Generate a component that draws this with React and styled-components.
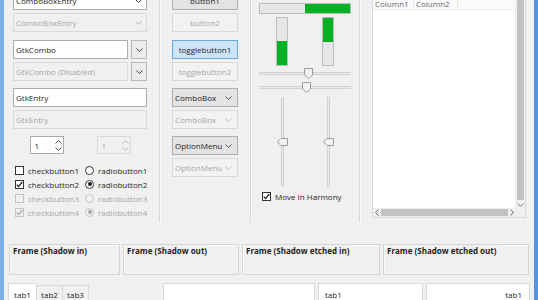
import React from "react";
import styled, { createGlobalStyle } from "styled-components";

const GlobalStyle = createGlobalStyle`
  html, body { margin: 0; padding: 0; background: #f0f0f0; }
  body {
    font-family: "Open Sans", "Noto Sans", sans-serif;
    font-size: 8px;
    color: #1e1e1e;
  }
  * { box-sizing: border-box; }
`;

const Window = styled.div`
  width: 538px;
  height: 300px;
  overflow: hidden;
  background: #f0f0f0;
  border-left: 4px solid #78b0ea;
  border-right: 4px solid #5296e3;
  display: flex;
  flex-direction: column;
`;

const TopArea = styled.div`
  display: flex;
  height: 231px;
  margin-top: -9px;
  flex-shrink: 0;
`;

const Column = styled.div`
  width: ${(p) => p.$w}px;
  padding-left: ${(p) => p.$pad}px;
  padding-top: ${(p) => p.$top || 0}px;
  display: flex;
  flex-direction: column;
  flex-shrink: 0;
`;

const Sep = styled.div`
  width: 2px;
  flex-shrink: 0;
  border-left: 1px solid #d7d7d7;
  border-right: 1px solid #fcfcfc;
`;

const Group = styled.div`
  display: flex;
  flex-direction: column;
  gap: 3px;
  margin-bottom: ${(p) => p.$mb || 0}px;
`;

/* ---------- entries ---------- */

const Entry = styled.div`
  width: ${(p) => p.$w || 134}px;
  height: 19px;
  display: flex;
  align-items: center;
  padding: 0 4px 0 2px;
  background: ${(p) => (p.$disabled ? "#f0f0f0" : "#fff")};
  border: 1px solid ${(p) => (p.$disabled ? "#d9d9d9" : "#acacac")};
  color: ${(p) => (p.$disabled ? "#a6a6a6" : "#1e1e1e")};
`;

const EntryText = styled.span`
  flex: 1;
  white-space: nowrap;
`;

const ComboRow = styled.div`
  display: flex;
  gap: 3px;
`;

const ArrowButton = styled.div`
  width: 16px;
  height: 19px;
  display: flex;
  align-items: center;
  justify-content: center;
  background: #ececec;
  border: 1px solid #b8b8b8;
`;

const Chevron = ({ color = "#444", up }) => (
  <svg width="7" height="4" viewBox="0 0 7 4">
    <polyline
      points={up ? "0.5,3.5 3.5,0.5 6.5,3.5" : "0.5,0.5 3.5,3.5 6.5,0.5"}
      fill="none"
      stroke={color}
      strokeWidth="1"
    />
  </svg>
);

const SideChevron = ({ left, color = "#666" }) => (
  <svg width="4" height="7" viewBox="0 0 4 7">
    <polyline
      points={left ? "3.5,0.5 0.5,3.5 3.5,6.5" : "0.5,0.5 3.5,3.5 0.5,6.5"}
      fill="none"
      stroke={color}
      strokeWidth="1"
    />
  </svg>
);

/* ---------- spin ---------- */

const SpinRow = styled.div`
  display: grid;
  grid-template-columns: 67px 67px;
  justify-items: center;
  margin-bottom: 9px;
`;

const Spin = styled.div`
  width: 34px;
  height: 18px;
  display: flex;
  align-items: center;
  padding: 0 1px 0 4px;
  background: ${(p) => (p.$disabled ? "#f0f0f0" : "#fff")};
  border: 1px solid ${(p) => (p.$disabled ? "#d9d9d9" : "#acacac")};
  color: ${(p) => (p.$disabled ? "#a6a6a6" : "#1e1e1e")};
`;

const SpinArrows = styled.div`
  display: flex;
  flex-direction: column;
  gap: 3px;
`;

/* ---------- checks & radios ---------- */

const CheckGrid = styled.div`
  display: grid;
  grid-template-columns: 70px 70px;
  grid-auto-rows: 14px;
`;

const CheckItem = styled.div`
  display: flex;
  align-items: center;
  gap: 4px;
  padding-left: ${(p) => p.$pad ?? 2}px;
  color: ${(p) => (p.$disabled ? "#a6a6a6" : "#1e1e1e")};
  white-space: nowrap;
`;

const Box = styled.span`
  width: 9px;
  height: 9px;
  flex-shrink: 0;
  display: flex;
  align-items: center;
  justify-content: center;
  background: ${(p) => (p.$disabled ? "#f0f0f0" : "#fff")};
  border: 1px solid ${(p) => (p.$disabled ? "#c4c4c4" : "#333")};
  border-radius: ${(p) => (p.$round ? "50%" : "0")};
`;

const Dot = styled.span`
  width: 4px;
  height: 4px;
  border-radius: 50%;
  background: ${(p) => (p.$disabled ? "#a6a6a6" : "#1e1e1e")};
`;

const Tick = ({ color }) => (
  <svg width="7" height="7" viewBox="0 0 7 7">
    <polyline points="0.8,3.6 2.6,5.6 6.3,1" fill="none" stroke={color} strokeWidth="1.3" />
  </svg>
);

const Check = ({ label, checked, disabled }) => (
  <CheckItem $disabled={disabled}>
    <Box $disabled={disabled}>{checked && <Tick color={disabled ? "#a6a6a6" : "#1e1e1e"} />}</Box>
    {label}
  </CheckItem>
);

const Radio = ({ label, checked, disabled }) => (
  <CheckItem $disabled={disabled}>
    <Box $round $disabled={disabled}>{checked && <Dot $disabled={disabled} />}</Box>
    {label}
  </CheckItem>
);

/* ---------- buttons ---------- */

const Button = styled.div`
  width: 66px;
  height: 19px;
  display: flex;
  align-items: center;
  justify-content: ${(p) => (p.$menu ? "space-between" : "center")};
  padding: ${(p) => (p.$menu ? "0 5px 0 2px" : "0")};
  white-space: nowrap;
  background: ${(p) => (p.$active ? "#cce4f7" : p.$disabled ? "#f2f2f2" : "#e3e3e3")};
  border: 1px solid
    ${(p) => (p.$active ? "#6fa9e2" : p.$disabled ? "#d9d9d9" : "#adadad")};
  color: ${(p) => (p.$disabled ? "#a6a6a6" : "#1e1e1e")};
`;

/* ---------- progress & scales ---------- */

const HProgress = styled.div`
  width: 92px;
  height: 11px;
  display: flex;
  justify-content: flex-end;
  background: #e6e6e6;
  border: 1px solid #bcbcbc;
`;

const Fill = styled.div`
  background: #06b025;
`;

const Halves = styled.div`
  display: grid;
  grid-template-columns: 46px 46px;
  justify-items: center;
  margin-top: ${(p) => p.$mt || 0}px;
`;

const VProgress = styled.div`
  width: 12px;
  height: 49px;
  display: flex;
  flex-direction: column;
  justify-content: ${(p) => (p.$fromTop ? "flex-start" : "flex-end")};
  background: #e6e6e6;
  border: 1px solid #bcbcbc;
`;

const HScale = styled.div`
  width: 92px;
  height: 11px;
  margin-top: ${(p) => p.$mt}px;
  display: flex;
  background: linear-gradient(
      to bottom,
      #d2d2d2 0 1px,
      #e9e9e9 1px 2px,
      #d2d2d2 2px 3px
    )
    0 50% / 100% 3px no-repeat;
`;

const VScale = styled.div`
  width: 11px;
  height: 90px;
  display: flex;
  flex-direction: column;
  align-items: flex-start;
  background: linear-gradient(
      to right,
      #d2d2d2 0 1px,
      #e9e9e9 1px 2px,
      #d2d2d2 2px 3px
    )
    50% 0 / 3px 100% no-repeat;
`;

const ThumbDown = () => (
  <svg width="9" height="11" viewBox="0 0 9 11">
    <path d="M0.5,0.5 H8.5 V7 L4.5,10.5 L0.5,7 Z" fill="#f2f2f2" stroke="#9a9a9a" />
  </svg>
);

const ThumbLeft = () => (
  <svg width="11" height="8" viewBox="0 0 11 8">
    <path d="M0.5,4 L4,0.5 H10.5 V7.5 H4 Z" fill="#f2f2f2" stroke="#9a9a9a" />
  </svg>
);

/* ---------- tree view ---------- */

const Tree = styled.div`
  width: 154px;
  height: 223px;
  margin-top: 4px;
  border: 1px solid #dadada;
  display: grid;
  grid-template-columns: 1fr 10px;
  grid-template-rows: 1fr 9px;
  background: #f0f0f0;
`;

const TreeBody = styled.div`
  background: #fff;
`;

const TreeHeader = styled.div`
  display: flex;
  height: 14px;
  padding-top: 1px;
  background: #fafafa;
  border-bottom: 1px solid #ececec;
  color: #6b6b6b;
`;

const HeaderCell = styled.div`
  width: ${(p) => p.$w}px;
  padding-left: 2px;
  display: flex;
  align-items: center;
  border-right: 1px solid #e6e6e6;
`;

const VScroll = styled.div`
  display: flex;
  flex-direction: column;
  align-items: center;
  padding: 2px 1px 1px 1px;
  gap: 3px;
`;

const VThumb = styled.div`
  width: 7px;
  flex: 1;
  background: #c2c2c2;
`;

const HScroll = styled.div`
  display: flex;
  align-items: center;
  padding: 0 1px 0 2px;
  gap: 2px;
`;

const HThumb = styled.div`
  height: 7px;
  flex: 1;
  background: #c2c2c2;
`;

/* ---------- frames ---------- */

const FramesRow = styled.div`
  display: flex;
  gap: 3px;
  padding-left: 5px;
  margin-top: 22px;
  flex-shrink: 0;
`;

const Frame = styled.div`
  width: ${(p) => p.$w}px;
  height: 31px;
  border: 1px solid #d6d6d6;
  box-shadow: inset 1px 1px 0 #fbfbfb;
`;

const Legend = styled.span`
  display: inline-block;
  margin: -6px 0 0 2px;
  padding: 0 1px;
  line-height: 11px;
  font-weight: 700;
  background: #f0f0f0;
  white-space: nowrap;
`;

/* ---------- notebooks ---------- */

const NotebookRow = styled.div`
  display: flex;
  gap: 3px;
  padding-left: 4px;
  margin-top: 8px;
  flex-shrink: 0;
`;

const TabStrip = styled.div`
  width: 152px;
  display: flex;
  align-items: flex-start;
`;

const Tab = styled.div`
  width: ${(p) => (p.$active ? 29 : 26)}px;
  height: ${(p) => (p.$active ? 20 : 18)}px;
  margin-top: ${(p) => (p.$active ? 0 : 2)}px;
  padding-top: ${(p) => (p.$active ? 5 : 3)}px;
  line-height: 11px;
  text-align: center;
  background: ${(p) => (p.$active ? "#fff" : "#f0f0f0")};
  border: 1px solid #d9d9d9;
  border-left-width: ${(p) => (p.$first ? 1 : 0)}px;
`;

const Page = styled.div`
  width: ${(p) => p.$w}px;
  height: 20px;
  padding: 5px ${(p) => p.$pad}px 0;
  line-height: 11px;
  text-align: ${(p) => p.$align || "left"};
  background: #fff;
  border: 1px solid #d9d9d9;
`;

export default function App() {
  return (
    <>
      <GlobalStyle />
      <Window>
        <TopArea>
          <Column $w={155} $pad={9}>
            <Group $mb={8}>
              <Entry>
                <EntryText>ComboBoxEntry</EntryText>
                <Chevron />
              </Entry>
              <Entry $disabled>
                <EntryText>ComboBoxEntry</EntryText>
                <Chevron color="#b0b0b0" />
              </Entry>
            </Group>
            <Group $mb={7}>
              <ComboRow>
                <Entry $w={115}>
                  <EntryText>GtkCombo</EntryText>
                </Entry>
                <ArrowButton>
                  <Chevron />
                </ArrowButton>
              </ComboRow>
              <ComboRow>
                <Entry $w={115} $disabled>
                  <EntryText>GtkCombo (Disabled)</EntryText>
                </Entry>
                <ArrowButton>
                  <Chevron />
                </ArrowButton>
              </ComboRow>
            </Group>
            <Group $mb={7}>
              <Entry>
                <EntryText>GtkEntry</EntryText>
              </Entry>
              <Entry $disabled>
                <EntryText>GtkEntry</EntryText>
              </Entry>
            </Group>
            <SpinRow>
              <Spin>
                <EntryText>1</EntryText>
                <SpinArrows>
                  <Chevron up color="#555" />
                  <Chevron color="#555" />
                </SpinArrows>
              </Spin>
              <Spin $disabled>
                <EntryText>1</EntryText>
                <SpinArrows>
                  <Chevron up color="#b8b8b8" />
                  <Chevron color="#b8b8b8" />
                </SpinArrows>
              </Spin>
            </SpinRow>
            <CheckGrid>
              <Check label="checkbutton1" />
              <Radio label="radiobutton1" />
              <Check label="checkbutton2" checked />
              <Radio label="radiobutton2" checked />
              <Check label="checkbutton3" disabled />
              <Radio label="radiobutton3" disabled />
              <Check label="checkbutton4" checked disabled />
              <Radio label="radiobutton4" checked disabled />
            </CheckGrid>
          </Column>
          <Sep />
          <Column $w={89} $pad={11}>
            <Group $mb={8}>
              <Button>button1</Button>
              <Button $disabled>button2</Button>
            </Group>
            <Group $mb={7}>
              <Button $active>togglebutton1</Button>
              <Button $disabled>togglebutton2</Button>
            </Group>
            <Group $mb={7}>
              <Button $menu>
                ComboBox
                <Chevron color="#555" />
              </Button>
              <Button $menu $disabled>
                ComboBox
                <Chevron color="#bbb" />
              </Button>
            </Group>
            <Group>
              <Button $menu>
                OptionMenu
                <Chevron color="#555" />
              </Button>
              <Button $menu $disabled>
                OptionMenu
                <Chevron color="#bbb" />
              </Button>
            </Group>
          </Column>
          <Sep />
          <Column $w={107} $pad={7} $top={12}>
            <HProgress>
              <Fill style={{ width: "45px" }} />
            </HProgress>
            <Halves $mt={3}>
              <VProgress>
                <Fill style={{ height: "24px" }} />
              </VProgress>
              <VProgress $fromTop>
                <Fill style={{ height: "24px" }} />
              </VProgress>
            </Halves>
            <HScale $mt={2}>
              <span style={{ marginLeft: "45px", display: "flex" }}>
                <ThumbDown />
              </span>
            </HScale>
            <HScale $mt={3}>
              <span style={{ marginLeft: "43px", display: "flex" }}>
                <ThumbDown />
              </span>
            </HScale>
            <Halves $mt={4}>
              <VScale>
                <span style={{ marginTop: "41px", display: "flex" }}>
                  <ThumbLeft />
                </span>
              </VScale>
              <VScale>
                <span style={{ marginTop: "41px", display: "flex" }}>
                  <ThumbLeft />
                </span>
              </VScale>
            </Halves>
            <div style={{ marginTop: "4px" }}>
              <CheckItem $pad={3}>
                <Box>
                  <Tick color="#1e1e1e" />
                </Box>
                Move In Harmony
              </CheckItem>
            </div>
          </Column>
          <Sep />
          <Column $w={173} $pad={11}>
            <Tree>
              <TreeBody>
                <TreeHeader>
                  <HeaderCell $w={41}>Column1</HeaderCell>
                  <HeaderCell $w={44}>Column2</HeaderCell>
                </TreeHeader>
              </TreeBody>
              <VScroll>
                <VThumb />
                <Chevron color="#777" />
              </VScroll>
              <HScroll>
                <SideChevron left />
                <HThumb />
                <SideChevron />
              </HScroll>
              <div />
            </Tree>
          </Column>
        </TopArea>
        <FramesRow>
          <Frame $w={111}>
            <Legend>Frame (Shadow in)</Legend>
          </Frame>
          <Frame $w={116}>
            <Legend>Frame (Shadow out)</Legend>
          </Frame>
          <Frame $w={138}>
            <Legend>Frame (Shadow etched in)</Legend>
          </Frame>
          <Frame $w={146}>
            <Legend>Frame (Shadow etched out)</Legend>
          </Frame>
        </FramesRow>
        <NotebookRow>
          <TabStrip>
            <Tab $active $first>tab1</Tab>
            <Tab>tab2</Tab>
            <Tab>tab3</Tab>
          </TabStrip>
          <Page $w={152} $pad={6} />
          <Page $w={105} $pad={6}>tab1</Page>
          <Page $w={104} $pad={7} $align="right">tab1</Page>
        </NotebookRow>
      </Window>
    </>
  );
}
